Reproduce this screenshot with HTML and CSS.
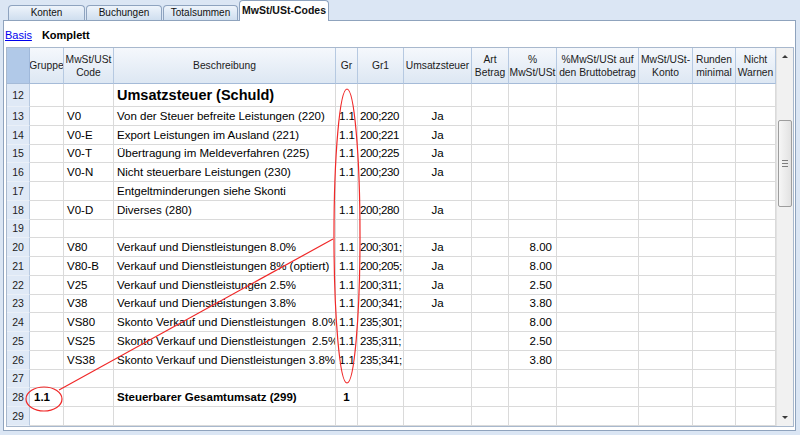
FILE: index.html
```html
<!DOCTYPE html>
<html>
<head>
    <title>MwSt/USt-Codes</title>
    <link rel="stylesheet" href="styles.css">
</head>
<body>
    <div class="tabs">
        <div class="tab t1">Konten</div>
        <div class="tab t2">Buchungen</div>
        <div class="tab t3">Totalsummen</div>
        <div class="tab active">MwSt/USt-Codes</div>
    </div>

    <div class="panel">
        <div class="views">
            <a href="#" class="view-link">Basis</a>
            <span class="view-current">Komplett</span>
        </div>

        <div class="grid-box">
            <div class="grid">
                <div class="row head">
                    <div class="corner"></div>
                    <div>Gruppe</div>
                    <div>MwSt/USt<br>Code</div>
                    <div>Beschreibung</div>
                    <div>Gr</div>
                    <div>Gr1</div>
                    <div>Umsatzsteuer</div>
                    <div>Art<br>Betrag</div>
                    <div>%<br>MwSt/USt</div>
                    <div>%MwSt/USt auf<br>den Bruttobetrag</div>
                    <div>MwSt/USt-<br>Konto</div>
                    <div>Runden<br>minimal</div>
                    <div>Nicht<br>Warnen</div>
                </div>

                <div class="row title">
                    <div>12</div><div></div><div></div><div class="big">Umsatzsteuer (Schuld)</div><div></div><div></div><div></div><div></div><div></div><div></div><div></div><div></div><div></div>
                </div>
                <div class="row">
                    <div>13</div><div></div><div>V0</div><div>Von der Steuer befreite Leistungen (220)</div><div>1.1</div><div>200;220</div><div>Ja</div><div></div><div></div><div></div><div></div><div></div><div></div>
                </div>
                <div class="row">
                    <div>14</div><div></div><div>V0-E</div><div>Export Leistungen im Ausland (221)</div><div>1.1</div><div>200;221</div><div>Ja</div><div></div><div></div><div></div><div></div><div></div><div></div>
                </div>
                <div class="row">
                    <div>15</div><div></div><div>V0-T</div><div>Übertragung im Meldeverfahren (225)</div><div>1.1</div><div>200;225</div><div>Ja</div><div></div><div></div><div></div><div></div><div></div><div></div>
                </div>
                <div class="row">
                    <div>16</div><div></div><div>V0-N</div><div>Nicht steuerbare Leistungen (230)</div><div>1.1</div><div>200;230</div><div>Ja</div><div></div><div></div><div></div><div></div><div></div><div></div>
                </div>
                <div class="row">
                    <div>17</div><div></div><div></div><div>Entgeltminderungen siehe Skonti</div><div></div><div></div><div></div><div></div><div></div><div></div><div></div><div></div><div></div>
                </div>
                <div class="row">
                    <div>18</div><div></div><div>V0-D</div><div>Diverses (280)</div><div>1.1</div><div>200;280</div><div>Ja</div><div></div><div></div><div></div><div></div><div></div><div></div>
                </div>
                <div class="row">
                    <div>19</div><div></div><div></div><div></div><div></div><div></div><div></div><div></div><div></div><div></div><div></div><div></div><div></div>
                </div>
                <div class="row">
                    <div>20</div><div></div><div>V80</div><div>Verkauf und Dienstleistungen 8.0%</div><div>1.1</div><div>200;301;</div><div>Ja</div><div></div><div>8.00</div><div></div><div></div><div></div><div></div>
                </div>
                <div class="row">
                    <div>21</div><div></div><div>V80-B</div><div>Verkauf und Dienstleistungen 8% (optiert)</div><div>1.1</div><div>200;205;</div><div>Ja</div><div></div><div>8.00</div><div></div><div></div><div></div><div></div>
                </div>
                <div class="row">
                    <div>22</div><div></div><div>V25</div><div>Verkauf und Dienstleistungen 2.5%</div><div>1.1</div><div>200;311;</div><div>Ja</div><div></div><div>2.50</div><div></div><div></div><div></div><div></div>
                </div>
                <div class="row">
                    <div>23</div><div></div><div>V38</div><div>Verkauf und Dienstleistungen 3.8%</div><div>1.1</div><div>200;341;</div><div>Ja</div><div></div><div>3.80</div><div></div><div></div><div></div><div></div>
                </div>
                <div class="row">
                    <div>24</div><div></div><div>VS80</div><div>Skonto Verkauf und Dienstleistungen  8.0%</div><div>1.1</div><div>235;301;</div><div></div><div></div><div>8.00</div><div></div><div></div><div></div><div></div>
                </div>
                <div class="row">
                    <div>25</div><div></div><div>VS25</div><div>Skonto Verkauf und Dienstleistungen  2.5%</div><div>1.1</div><div>235;311;</div><div></div><div></div><div>2.50</div><div></div><div></div><div></div><div></div>
                </div>
                <div class="row">
                    <div>26</div><div></div><div>VS38</div><div>Skonto Verkauf und Dienstleistungen 3.8%</div><div>1.1</div><div>235;341;</div><div></div><div></div><div>3.80</div><div></div><div></div><div></div><div></div>
                </div>
                <div class="row">
                    <div>27</div><div></div><div></div><div></div><div></div><div></div><div></div><div></div><div></div><div></div><div></div><div></div><div></div>
                </div>
                <div class="row total">
                    <div>28</div><div>1.1</div><div></div><div>Steuerbarer Gesamtumsatz (299)</div><div class="center">1</div><div></div><div></div><div></div><div></div><div></div><div></div><div></div><div></div>
                </div>
                <div class="row">
                    <div>29</div><div></div><div></div><div></div><div></div><div></div><div></div><div></div><div></div><div></div><div></div><div></div><div></div>
                </div>
            </div>

            <div class="vscroll">
                <div class="sb-btn"><span class="arrow-up"></span></div>
                <div class="thumb"><span class="grip"></span></div>
                <div class="sb-btn bottom"><span class="arrow-down"></span></div>
            </div>
        </div>
    </div>

    <!-- red hand-drawn marks over the grid -->
    <svg class="marks" width="800" height="435" viewBox="0 0 800 435">
        <ellipse cx="347" cy="236" rx="13" ry="147" />
        <ellipse cx="44" cy="399" rx="18" ry="12" />
        <line x1="59" y1="390" x2="333" y2="239" />
    </svg>
</body>
</html>
```

FILE: styles.css
```css
body {
    margin: 0;
    width: 800px;
    height: 435px;
    overflow: hidden;
    position: relative;
    background: #dbe6f4;
    font-family: "Liberation Sans", Arial, sans-serif;
    color: #000;
}

/* tab strip */
.tabs { display: flex; align-items: flex-end; gap: 1px; height: 20px; padding-left: 8px; }
.tab {
    box-sizing: border-box;
    height: 15px;
    border: 1px solid #8ea3bf;
    border-bottom: none;
    border-radius: 4px 4px 0 0;
    background: linear-gradient(#eef4fb, #cfdeef);
    font-size: 10px;
    line-height: 14px;
    text-align: center;
    color: #111;
}
.t1 { width: 77px; }
.t2 { width: 76px; }
.t3 { width: 75px; }
.tab.active {
    width: 90px;
    height: 21px;
    margin-bottom: -1px;
    position: relative;
    z-index: 1;
    background: #fff;
    font-weight: bold;
    font-size: 10.5px;
    line-height: 19px;
}

.panel {
    box-sizing: border-box;
    height: 411px;
    margin: 0 4px 0 3px;
    border: 1px solid #8fa3bd;
    background: #fff;
}

.views { display: flex; align-items: center; gap: 10px; height: 26px; padding: 2px 0 0 1px; box-sizing: border-box; font-size: 11px; }
.view-link { color: #0000ee; }
.view-current { font-weight: bold; }

/* grid */
.grid-box {
    display: flex;
    width: 788px;
    margin-left: 2px;
    border: 1px solid #a8b8cd;
    box-sizing: border-box;
}
.grid { width: 769px; }
.row {
    display: grid;
    grid-template-columns: 23px 34px 50px 222px 22px 46px 68px 37px 48px 82px 54px 43px 40px;
    height: 18.765px;
    font-size: 11.5px;
}
.row > div {
    box-sizing: border-box;
    border-right: 1px solid #dadada;
    border-bottom: 1px solid #dadada;
    overflow: hidden;
    white-space: pre;
    display: flex;
    align-items: center;
    padding-left: 3px;
}
.row > div:nth-child(1) {
    justify-content: center;
    padding: 0;
    background: #dfe9f6;
    border-color: #eaf0f8 #b7c9e0 #eaf0f8 transparent;
    font-size: 10.5px;
    color: #222;
}
.row > div:nth-child(2) { padding-left: 4px; }
.row > div:nth-child(6) { padding-left: 2px; letter-spacing: -0.35px; }
.row > div:nth-child(7) { justify-content: center; padding: 0; }
.row > div:nth-child(9) { justify-content: flex-end; padding: 0 4px 0 0; }
.row > div.center { justify-content: center; padding: 0; }

.row.head { height: 36px; font-size: 10.3px; }
.row.head > div {
    justify-content: center;
    text-align: center;
    white-space: nowrap;
    padding: 0;
    letter-spacing: 0;
    line-height: 13px;
    color: #1b1b1b;
    background: linear-gradient(#f5f8fc, #dde7f3);
    border-right-color: #b6c9e1;
    border-bottom-color: #a5bbd8;
}
.row.head > div.corner { background: #b1c9e8; border-right-color: #9fb8da; }

.row.title { height: 23px; }
.big { font-size: 14.5px; font-weight: bold; }
.row.total > div { font-weight: bold; }
.row.total > div:nth-child(1) { font-weight: normal; }

/* vertical scrollbar */
.vscroll {
    box-sizing: border-box;
    width: 17px;
    display: flex;
    flex-direction: column;
    background: #f1f1f1;
    border-left: 1px solid #e2e2e2;
}
.sb-btn { height: 17px; display: flex; align-items: center; justify-content: center; }
.sb-btn.bottom { margin-top: auto; }
.arrow-up, .arrow-down { width: 0; height: 0; border-left: 3px solid transparent; border-right: 3px solid transparent; }
.arrow-up { border-bottom: 3px solid #3a3a3a; }
.arrow-down { border-top: 3px solid #3a3a3a; }
.thumb {
    box-sizing: border-box;
    height: 87px;
    margin: 55px 1px 0 1px;
    border: 1px solid #9d9d9d;
    border-radius: 2px;
    background: linear-gradient(90deg, #f6f6f6, #e2e2e2);
    display: flex;
    align-items: center;
    justify-content: center;
}
.grip {
    width: 6px;
    height: 5px;
    border-top: 1px solid #7d7d7d;
    border-bottom: 1px solid #7d7d7d;
    background: linear-gradient(#7d7d7d, #7d7d7d) center / 6px 1px no-repeat;
}

.marks { position: absolute; top: 0; left: 0; pointer-events: none; }
.marks ellipse, .marks line { fill: none; stroke: #f02828; stroke-width: 1.2; }
```
